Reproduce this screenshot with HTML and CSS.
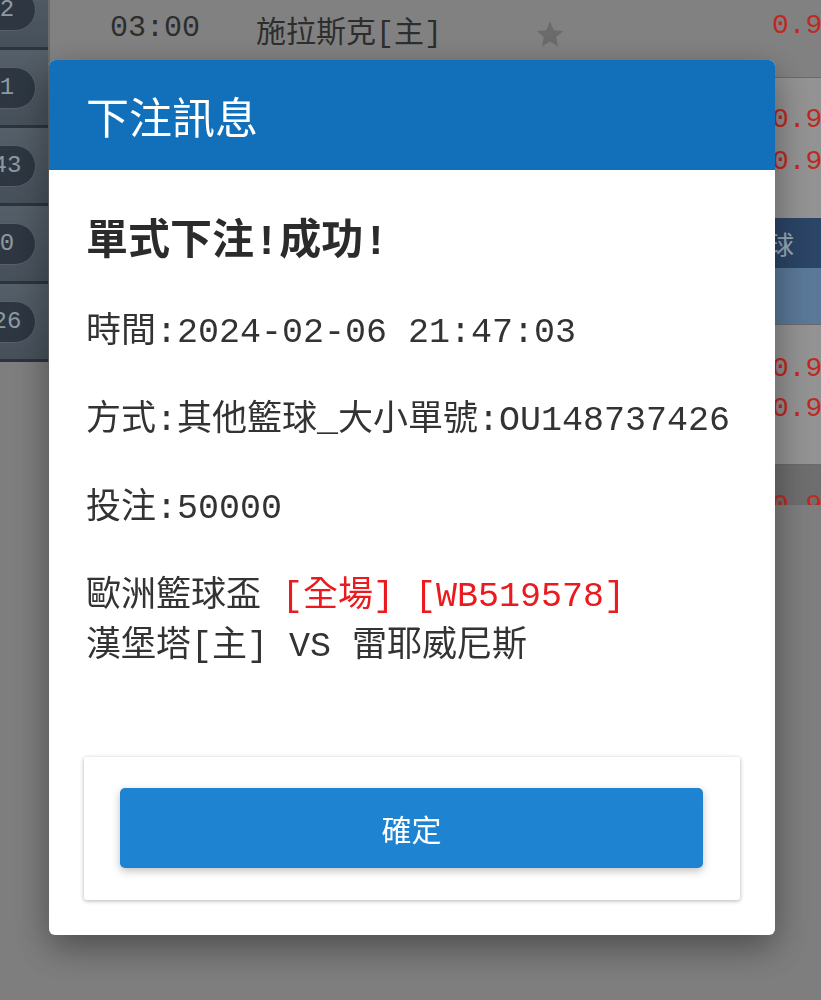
FILE: index.html
```html
<!DOCTYPE html>
<html lang="zh-Hant">
<head>
  <meta charset="UTF-8">
  <title>下注訊息</title>
  <meta name="viewport" content="width=device-width, initial-scale=1.0">
  <link rel="stylesheet" href="styles.css">
</head>
<body>
  <div class="page">
    <aside class="sidebar">
      <div class="side-item"><span class="count">2</span></div>
      <div class="side-item"><span class="count">1</span></div>
      <div class="side-item"><span class="count">43</span></div>
      <div class="side-item"><span class="count">0</span></div>
      <div class="side-item"><span class="count">26</span></div>
    </aside>
    <main class="list">
      <div class="row match">
        <span class="time">03:00</span>
        <span class="team">施拉斯克[主]</span>
        <svg class="star" width="32" height="32" viewBox="0 0 24 24"><path d="M12 2.5l2.9 6.6 7.1.6-5.4 4.7 1.6 7-6.2-3.7-6.2 3.7 1.6-7L2 9.7l7.1-.6z"/></svg>
        <span class="odds">0.95</span>
      </div>
      <div class="row lines first-lines">
        <div class="odds-col"><span class="odds">0.92</span><span class="odds">0.90</span></div>
      </div>
      <div class="league"><span>其他籃球</span></div>
      <div class="subhead"></div>
      <div class="row lines second-lines">
        <div class="odds-col"><span class="odds">0.93</span><span class="odds">0.91</span></div>
      </div>
      <div class="row band">
        <div class="odds-col"><span class="odds">0.90</span></div>
      </div>
    </main>
  </div>

  <div class="backdrop"></div>

  <div class="modal">
    <div class="modal-head">下注訊息</div>
    <div class="modal-body">
      <h3 class="result">單式下注!成功!</h3>
      <p>時間:2024-02-06 21:47:03</p>
      <p>方式:其他籃球_大小單號:OU148737426</p>
      <p>投注:50000</p>
      <p>歐洲籃球盃 <span class="tag">[全場]</span> <span class="tag">[WB519578]</span><br>漢堡塔[主] VS 雷耶威尼斯</p>
    </div>
    <div class="modal-foot">
      <button class="btn-ok">確定</button>
    </div>
  </div>
</body>
</html>
```

FILE: styles.css
```css
html, body {
  margin: 0;
  padding: 0;
  height: 100%;
  overflow: hidden;
  background: #a8a8a8;
  font-family: "Liberation Mono", "Noto Sans CJK TC", monospace;
}

/* page behind the dialog */
.page {
  display: flex;
  align-items: flex-start;
}
.sidebar {
  width: 48px;
  margin-top: -28px;
  flex-shrink: 0;
  border-right: 2px solid #8f8f8f;
}
.side-item {
  height: 75px;
  display: flex;
  align-items: center;
  background: linear-gradient(#727f8c, #5e6b78);
  border-bottom: 3px solid #3b4550;
  overflow: hidden;
}
.count {
  width: 56px;
  height: 40px;
  margin-left: -22px;
  flex-shrink: 0;
  border-radius: 21px;
  background: #3c4957;
  border: 1px solid #73808d;
  color: #bdccd9;
  font-size: 24px;
  line-height: 40px;
  text-align: center;
}

.list {
  flex: 1;
  height: 505px;
  overflow: hidden;
  background: #a8a8a8;
}
.row {
  display: flex;
  border-bottom: 1px solid #8e8e8e;
}
.match {
  height: 99px;
  margin-top: -22px;
  align-items: center;
  padding-left: 60px;
  background: #adadad;
  color: #3d3d3d;
  font-size: 30px;
}
.time {
  width: 146px;
}
.team {
  width: 278px;
  margin-top: 2px;
}
.star {
  fill: #8f8f8f;
  margin-top: 12px;
}
.odds {
  color: #fc382d;
  font-size: 28px;
}
.match .odds {
  margin-left: auto;
  width: 49px;
  margin-top: -4px;
}
.lines {
  background: #c4c4c4;
  justify-content: flex-end;
}
.odds-col {
  width: 49px;
  display: flex;
  flex-direction: column;
}
.first-lines {
  height: 119px;
  padding-top: 21px;
  border-bottom: none;
}
.first-lines .odds {
  line-height: 42px;
}
.league {
  height: 50px;
  background: #3a5c88;
  color: #cde3f9;
  font: 26px "Noto Sans CJK TC", sans-serif;
  display: flex;
  align-items: center;
  padding-left: 640px;
  white-space: nowrap;
}
.subhead {
  height: 56px;
  background: #78a0cb;
  border-bottom: 1px solid #8e8e8e;
}
.second-lines {
  height: 115px;
  padding-top: 24px;
}
.second-lines .odds {
  line-height: 40px;
}
.band {
  height: 80px;
  padding-top: 21px;
  background: #939393;
  justify-content: flex-end;
  border-bottom: none;
}
.band .odds {
  line-height: 40px;
}

.backdrop {
  position: fixed;
  inset: 0;
  background: rgba(0, 0, 0, 0.25);
}

/* dialog */
.modal {
  position: fixed;
  left: 49px;
  top: 60px;
  width: 726px;
  height: 875px;
  background: #fff;
  border-radius: 6px;
  box-shadow: 0 12px 36px rgba(0, 0, 0, 0.4);
  display: flex;
  flex-direction: column;
  overflow: hidden;
}
.modal-head {
  height: 110px;
  flex-shrink: 0;
  background: #1170b9;
  color: #fff;
  display: flex;
  align-items: center;
  padding-left: 37px;
  font: 400 43px "Noto Sans CJK TC", sans-serif;
}
.modal-body {
  padding: 48px 37px 0;
  font-size: 35px;
  line-height: 50px;
  color: #333;
}
.result {
  margin: 0 0 40px;
  font-size: 42px;
  font-weight: bold;
  color: #2b2b2b;
}
.modal-body p {
  margin: 0 0 38px;
  white-space: nowrap;
}
.tag {
  color: #ea1a1f;
}
.modal-foot {
  margin: auto 35px 35px;
  padding: 31px 37px 32px 36px;
  background: #fff;
  border-radius: 3px;
  box-shadow: 0 1px 4px rgba(0, 0, 0, 0.3);
}
.btn-ok {
  display: block;
  width: 100%;
  height: 80px;
  border: none;
  border-radius: 5px;
  background: #1e83d0;
  color: #fff;
  font: 400 30px "Noto Sans CJK TC", sans-serif;
  box-shadow: 0 3px 8px rgba(0, 0, 0, 0.25);
  cursor: pointer;
}
```
